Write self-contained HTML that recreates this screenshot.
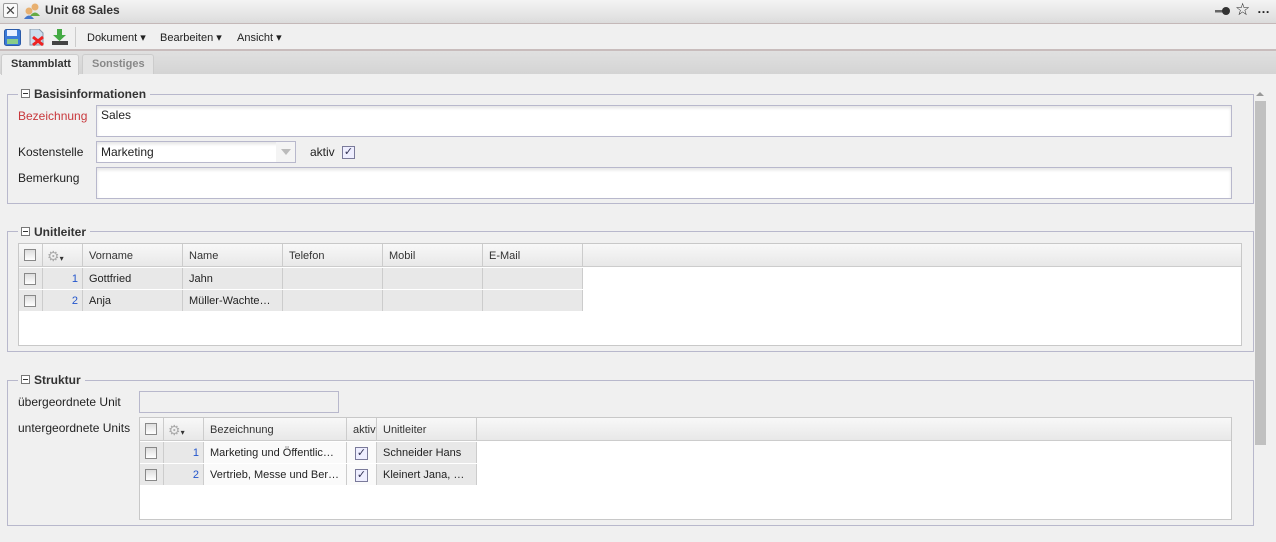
<!DOCTYPE html>
<html><head><meta charset="utf-8"><style>
*{box-sizing:border-box;margin:0;padding:0}
body{width:1276px;height:542px;overflow:hidden;background:#f0f0f0;font-family:"Liberation Sans",sans-serif;font-size:12px;color:#222;position:relative}
.a{position:absolute}
.fs{position:absolute;border:1px solid #b8b8cc}
.lg{position:absolute;background:#f0f0f0;font-weight:bold;font-size:12px;padding:0 4px 0 3px;color:#333;display:flex;align-items:center}
.mn{display:inline-block;width:9px;height:9px;border:1px solid #777;margin-right:4px;position:relative;background:#fff}
.mn:after{content:"";position:absolute;left:1px;right:1px;top:3px;height:1px;background:#333}
.inp{position:absolute;background:#fff;border:1px solid #b8b8cc;box-shadow:inset 0 2px 3px #e4e4e4}
.grid{position:absolute;background:#fff;border:1px solid #c8c8c8}
.hd{position:absolute;top:0;height:23px;background:linear-gradient(#f8f8f8,#e8e8e8);border-bottom:1px solid #ccc;border-right:1px solid #ccc;font-size:11px;line-height:24px;padding-left:6px;color:#333}
.c{position:absolute;height:21px;background:#e8e8e8;border-right:1px solid #ccc;font-size:11px;line-height:22px;padding-left:6px;white-space:nowrap;overflow:hidden}
.cb{display:inline-block;width:12px;height:12px;border:1px solid #888;background:linear-gradient(#ddd,#fff);position:absolute;left:5px;top:5px}
.n{color:#2255cc;text-align:right;padding-right:4px}
.chk{position:absolute;width:13px;height:13px;border:1px solid #7a7a9a;background:#eef;font-size:11px;line-height:11px;text-align:center;color:#335}
</style></head><body>
<div class="a" style="left:0;top:0;width:1276px;height:24px;background:linear-gradient(#f4f4f4,#dcdcdc);border-bottom:1px solid #c4b8b8"></div>
<div class="a" style="left:3px;top:3px;width:15px;height:15px;border:1px solid #999;border-radius:2px;background:#fafafa;font-size:13px;line-height:13px;text-align:center;color:#444">✕</div>
<svg class="a" style="left:23px;top:2px" width="18" height="18"><circle cx="12" cy="5" r="3.5" fill="#e8b070"/><path d="M7 14 Q12 7 17 14Z" fill="#6a4"/><circle cx="6" cy="9" r="3.5" fill="#e8b070"/><path d="M1 17 Q6 10 11 17Z" fill="#47c"/></svg>
<div class="a" style="left:45px;top:3px;font-weight:bold;font-size:12px;color:#333">Unit 68 Sales</div>
<div class="a" style="left:1215px;top:5px;width:16px;height:12px;font-size:11px">
<svg width="16" height="12"><rect x="0" y="5" width="9" height="2.5" fill="#666"/><circle cx="11" cy="6" r="4" fill="#333"/></svg></div>
<div class="a" style="left:1235px;top:1px;font-size:17px;line-height:18px">☆</div>
<div class="a" style="left:1257px;top:1px;font-weight:bold;font-size:13px">…</div>
<div class="a" style="left:0;top:49px;width:1276px;height:2px;background:#c8bcbc"></div>
<svg class="a" style="left:4px;top:29px" width="17" height="17"><rect x="0.5" y="0.5" width="16" height="16" rx="2" fill="#3a7ad8" stroke="#2a5aa8"/><rect x="3" y="1" width="10" height="6" fill="#e8f0ff"/><rect x="3" y="10" width="11" height="5" fill="#8c8"/></svg>
<svg class="a" style="left:28px;top:29px" width="17" height="17"><path d="M2 0H11L15 4V16H2Z" fill="#cde" stroke="#89a"/><path d="M5 8L15 16M15 8L5 16" stroke="#e22" stroke-width="3"/></svg>
<svg class="a" style="left:52px;top:29px" width="16" height="17"><path d="M5 0H10V6H14L7.5 12L1 6H5Z" fill="#4a4"/><rect x="0" y="12" width="16" height="4" fill="#444"/></svg>
<div class="a" style="left:75px;top:27px;width:1px;height:20px;background:#ccc"></div>
<div class="a" style="left:87px;top:31px;font-size:11px">Dokument ▾</div>
<div class="a" style="left:160px;top:31px;font-size:11px">Bearbeiten ▾</div>
<div class="a" style="left:237px;top:31px;font-size:11px">Ansicht ▾</div>
<div class="a" style="left:0;top:51px;width:1276px;height:23px;background:linear-gradient(#e0e0e0,#d4d4d4)"></div>
<div class="a" style="left:1px;top:54px;width:78px;height:21px;background:#f0f0f0;border:1px solid #ccc;border-bottom:none;border-radius:3px 3px 0 0;font-weight:bold;font-size:11px;line-height:18px;padding-left:9px;color:#333">Stammblatt</div>
<div class="a" style="left:82px;top:54px;width:72px;height:20px;background:#e4e4e4;border:1px solid #ccc;border-bottom:none;border-radius:3px 3px 0 0;font-weight:bold;font-size:11px;line-height:18px;padding-left:9px;color:#888">Sonstiges</div>
<div class="a" style="left:1256px;top:92px;width:0;height:0;border-left:4px solid transparent;border-right:4px solid transparent;border-bottom:4px solid #999"></div>
<div class="a" style="left:1255px;top:101px;width:11px;height:344px;background:#c0c0c0"></div>

<div class="fs" style="left:7px;top:94px;width:1247px;height:110px"></div>
<div class="lg" style="left:18px;top:86px;height:15px"><span class="mn"></span>Basisinformationen</div>
<div class="a" style="left:18px;top:109px;color:#c8383c">Bezeichnung</div>
<div class="inp" style="left:96px;top:105px;width:1136px;height:32px;padding:2px 4px">Sales</div>
<div class="a" style="left:18px;top:145px">Kostenstelle</div>
<div class="inp" style="left:96px;top:141px;width:200px;height:22px;padding:3px 4px">Marketing</div>
<div class="a" style="left:276px;top:142px;width:19px;height:20px;background:#f4f4f4"></div>
<div class="a" style="left:281px;top:149px;width:0;height:0;border-left:5px solid transparent;border-right:5px solid transparent;border-top:6px solid #bbb"></div>
<div class="a" style="left:310px;top:145px">aktiv</div>
<div class="chk" style="left:342px;top:146px">✓</div>
<div class="a" style="left:18px;top:171px">Bemerkung</div>
<div class="inp" style="left:96px;top:167px;width:1136px;height:32px"></div>

<div class="fs" style="left:7px;top:231px;width:1247px;height:121px"></div>
<div class="lg" style="left:18px;top:224px;height:15px"><span class="mn"></span>Unitleiter</div>
<div class="grid" style="left:18px;top:243px;width:1224px;height:103px">
<div class="hd" style="left:0;width:24px"><span class="cb"></span></div>
<div class="hd" style="left:24px;width:40px;color:#aaa;font-size:14px;padding-left:4px">⚙<span style="font-size:8px;color:#333">▾</span></div>
<div class="hd" style="left:64px;width:100px">Vorname</div>
<div class="hd" style="left:164px;width:100px">Name</div>
<div class="hd" style="left:264px;width:100px">Telefon</div>
<div class="hd" style="left:364px;width:100px">Mobil</div>
<div class="hd" style="left:464px;width:100px">E-Mail</div>
<div class="hd" style="left:564px;width:658px;border-right:none"></div>
<div class="c" style="left:0;top:24px;width:24px"><span class="cb"></span></div>
<div class="c n" style="left:24px;top:24px;width:40px">1</div>
<div class="c" style="left:64px;top:24px;width:100px">Gottfried</div>
<div class="c" style="left:164px;top:24px;width:100px">Jahn</div>
<div class="c" style="left:264px;top:24px;width:100px"></div>
<div class="c" style="left:364px;top:24px;width:100px"></div>
<div class="c" style="left:464px;top:24px;width:100px"></div>
<div class="c" style="left:0;top:46px;width:24px"><span class="cb"></span></div>
<div class="c n" style="left:24px;top:46px;width:40px">2</div>
<div class="c" style="left:64px;top:46px;width:100px">Anja</div>
<div class="c" style="left:164px;top:46px;width:100px">Müller-Wachte…</div>
<div class="c" style="left:264px;top:46px;width:100px"></div>
<div class="c" style="left:364px;top:46px;width:100px"></div>
<div class="c" style="left:464px;top:46px;width:100px"></div>
</div>

<div class="fs" style="left:7px;top:380px;width:1247px;height:146px"></div>
<div class="lg" style="left:18px;top:372px;height:15px"><span class="mn"></span>Struktur</div>
<div class="a" style="left:18px;top:395px">übergeordnete Unit</div>
<div class="a" style="left:139px;top:391px;width:200px;height:22px;border:1px solid #b8b8cc;background:#f0f0f0"></div>
<div class="a" style="left:18px;top:421px">untergeordnete Units</div>
<div class="grid" style="left:139px;top:417px;width:1093px;height:103px">
<div class="hd" style="left:0;width:24px"><span class="cb"></span></div>
<div class="hd" style="left:24px;width:40px;color:#aaa;font-size:14px;padding-left:4px">⚙<span style="font-size:8px;color:#333">▾</span></div>
<div class="hd" style="left:64px;width:143px">Bezeichnung</div>
<div class="hd" style="left:207px;width:30px;padding-left:6px">aktiv</div>
<div class="hd" style="left:237px;width:100px">Unitleiter</div>
<div class="hd" style="left:337px;width:754px;border-right:none"></div>
<div class="c" style="left:0;top:24px;width:24px"><span class="cb"></span></div>
<div class="c n" style="left:24px;top:24px;width:40px">1</div>
<div class="c" style="left:64px;top:24px;width:143px;background:#fafafa">Marketing und Öffentlic…</div>
<div class="c" style="left:207px;top:24px;width:30px;background:#fafafa"><span class="chk" style="left:8px;top:5px">✓</span></div>
<div class="c" style="left:237px;top:24px;width:100px">Schneider Hans</div>
<div class="c" style="left:0;top:46px;width:24px"><span class="cb"></span></div>
<div class="c n" style="left:24px;top:46px;width:40px">2</div>
<div class="c" style="left:64px;top:46px;width:143px;background:#fafafa">Vertrieb, Messe und Ber…</div>
<div class="c" style="left:207px;top:46px;width:30px;background:#fafafa"><span class="chk" style="left:8px;top:5px">✓</span></div>
<div class="c" style="left:237px;top:46px;width:100px">Kleinert Jana, …</div>
</div>
</body></html>
